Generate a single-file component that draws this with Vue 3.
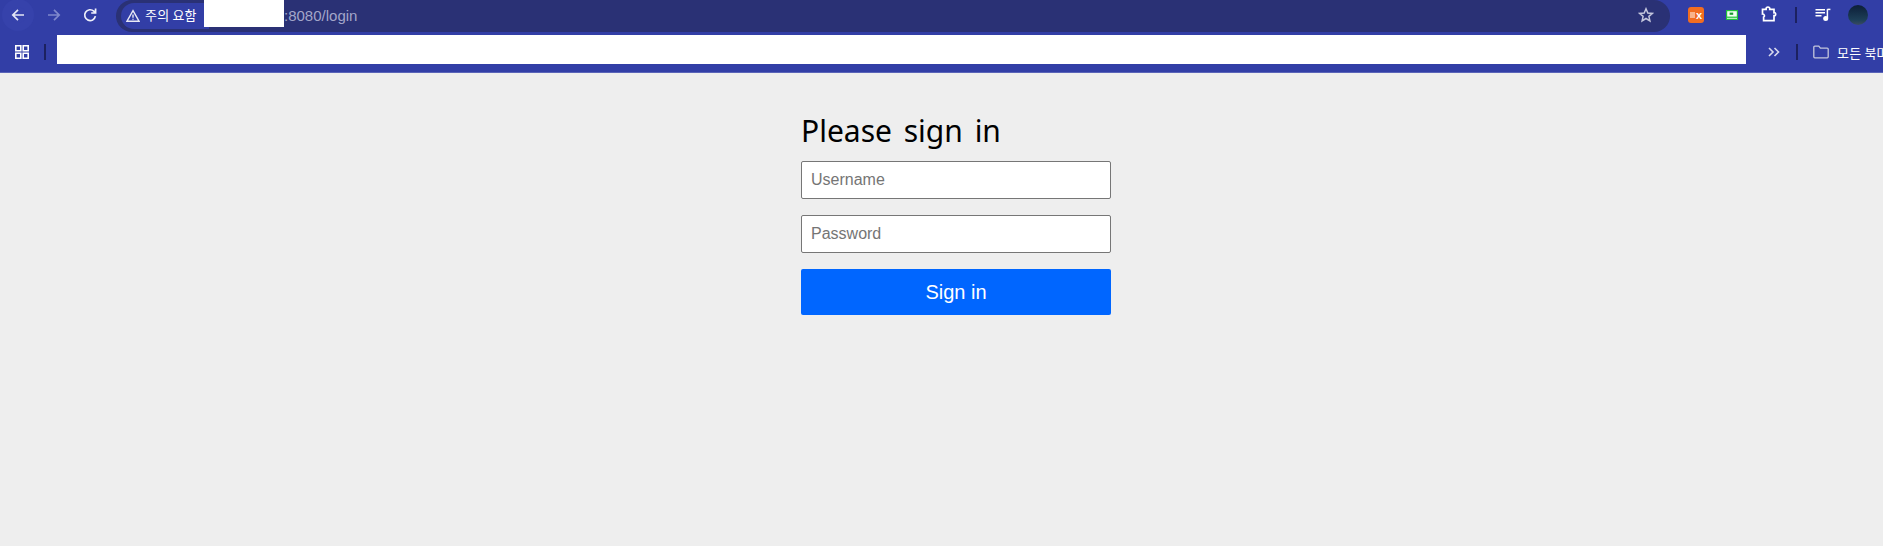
<script setup>
</script>

<template>
  <div class="page">
    <header class="chrome">
      <div class="toolbar">
        <div class="nav">
          <svg class="ic back" viewBox="0 0 16 16"><path d="M14 8H3M8 2.800 2.800 8 8 13.200" /></svg>
          <svg class="ic fwd" viewBox="0 0 16 16"><path d="M2 8h11M8 2.800 13.200 8 8 13.200" /></svg>
          <svg class="ic reload" viewBox="0 0 16 16"><path d="M13.400 9.200A5.400 5.400 0 1 1 11.800 4.200L13.400 5.800M13.600 1.600v4.400H9.200" /></svg>
        </div>
        <div class="omnibox">
          <div class="chip">
            <svg class="warn" viewBox="0 0 14 14"><path d="M7 1.600 13 12.200H1Z" /><path d="M7 5.400v3.400M7 9.800v1" /></svg>
            <span>주의 요함</span>
          </div>
          <span class="url">:8080/login</span>
          <div class="mask"></div>
          <svg class="star" viewBox="0 0 16 16"><path d="M8 1.800 9.800 6l4.600.400-3.500 3 1 4.500L8 11.500l-3.900 2.400 1-4.500-3.500-3L6.200 6Z" /></svg>
        </div>
        <div class="tools">
          <div class="ext-x"><i></i><b>x</b></div>
          <svg class="ext-green" viewBox="0 0 12 10"><rect x="0" y="0" width="12" height="10" fill="#1fc23a" /><rect x="1.200" y="1.200" width="9.600" height="5.400" fill="#f2fff2" /><rect x="3.600" y="2.600" width="3.600" height="2.200" fill="#1a9a30" /><rect x="1" y="7.800" width="10" height="1" fill="#d9ffd9" /></svg>
          <svg class="ic puzzle" viewBox="0 0 16 16"><path d="M1.500 3.400h3.600c-.5-3.200 4.200-3.200 3.700 0h4.200v3.200c2.200-.5 2.200 3.600 0 3.100v4.900H2.600v-3.400c1.400-.3 1-3.400-1.100-3.200Z" /></svg>
          <span class="sep"></span>
          <svg class="media" viewBox="0 0 16 16"><path d="M.5 2.800h9.500M.5 5.800h9.500M.5 8.800h6" /><path d="M12.400 2.200v9" /><path d="M12.400 2.400h3" /><circle cx="10.700" cy="11.600" r="2.500" fill="#fff" stroke="none" /></svg>
          <div class="avatar"></div>
        </div>
      </div>
      <div class="bookmarks">
        <svg class="apps" viewBox="0 0 14 14"><path d="M.8.800h5v5h-5ZM8.200.800h5v5h-5ZM.8 8.200h5v5h-5ZM8.200 8.200h5v5h-5Z" /></svg>
        <span class="sep short first"></span>
        <div class="hidden-bar"></div>
        <svg class="more" viewBox="0 0 12 10"><path d="M1 1 5 5 1 9M6.500 1 10.500 5 6.500 9" /></svg>
        <span class="sep short second"></span>
        <svg class="folder" viewBox="0 0 16 14"><path d="M.8 2.200a1 1 0 0 1 1-1h4l1.600 1.900h6.800a1 1 0 0 1 1 1v7.700a1 1 0 0 1-1 1H1.800a1 1 0 0 1-1-1Z" /></svg>
        <span class="all">모든 북마크</span>
      </div>
    </header>

    <main class="content">
      <form class="signin" @submit.prevent>
        <h2>Please sign in</h2>
        <input type="text" placeholder="Username" />
        <input type="password" placeholder="Password" />
        <button type="submit">Sign in</button>
      </form>
    </main>
  </div>
</template>

<style scoped>
.page {
  width: 1883px;
  height: 546px;
  overflow: hidden;
  background: #eeeeee;
  font-family: "Liberation Sans", Arial, sans-serif;
}
.chrome {
  height: 73px;
  box-sizing: border-box;
  background: #323ea6;
  border-bottom: 1px solid #5a64b8;
}
.toolbar {
  height: 35px;
  display: flex;
  align-items: flex-start;
}
.nav {
  width: 116px;
  height: 30px;
  display: flex;
  align-items: center;
  padding-left: 10px;
  gap: 20px;
  box-sizing: border-box;
}
.ic {
  width: 16px;
  height: 16px;
  fill: none;
  stroke: #fff;
  stroke-width: 1.7;
}
.back {
  border-radius: 50%;
  background: #3642ab;
  box-shadow: 0 0 0 8px #3642ab;
  stroke: #e4e6f5;
}
.fwd { stroke: #7f88cc; }
.reload { stroke: #eef0fa; }
.omnibox {
  position: relative;
  width: 1554px;
  height: 32px;
  background: #2a3175;
  border-radius: 16px;
  display: flex;
  align-items: center;
  padding-left: 5px;
  box-sizing: border-box;
}
.chip {
  display: flex;
  align-items: center;
  gap: 5px;
  height: 26px;
  width: 88px;
  padding-left: 5px;
  box-sizing: border-box;
  border-radius: 13px 0 0 13px;
  background: #323ea6;
  color: #fff;
  font: 13px "Noto Sans CJK KR", sans-serif;
  letter-spacing: 0.2px;
  white-space: nowrap;
}
.chip span { margin-top: -3px; }
.warn {
  width: 14px;
  height: 14px;
  fill: none;
  stroke: #e8e9f5;
  stroke-width: 1.4;
  flex: none;
}
.url {
  margin-left: 75px;
  margin-bottom: 2px;
  color: #a3a6c9;
  font: 15px "Liberation Sans", sans-serif;
}
.mask {
  position: absolute;
  left: 88px;
  top: 0;
  width: 80px;
  height: 27px;
  background: #fff;
}
.star {
  margin-left: auto;
  margin-right: 16px;
  margin-bottom: 2px;
  width: 16px;
  height: 16px;
  fill: none;
  stroke: #c4c6dc;
  stroke-width: 1.5;
}
.tools {
  flex: 1;
  height: 30px;
  display: flex;
  align-items: center;
  padding-left: 18px;
}
.ext-x {
  width: 16px;
  height: 16px;
  border-radius: 3px;
  background: #f26d21;
  display: flex;
  align-items: center;
  justify-content: center;
  gap: 1px;
  flex: none;
}
.ext-x i {
  width: 5px;
  height: 6px;
  background: #f9b48c;
}
.ext-x b {
  color: #fff;
  font: bold 11px/10px "Liberation Sans", sans-serif;
}
.ext-green {
  width: 12px;
  height: 10px;
  margin-left: 22px;
  flex: none;
}
.puzzle { margin-left: 23px; margin-bottom: 2px; flex: none; }
.sep {
  width: 2px;
  height: 16px;
  margin-left: 18px;
  background: #1c2160;
  flex: none;
}
.media {
  width: 16px;
  height: 16px;
  margin-left: 18px;
  fill: none;
  stroke: #fff;
  stroke-width: 1.500;
  flex: none;
}
.avatar {
  width: 20px;
  height: 20px;
  margin-left: 17px;
  border-radius: 50%;
  background: linear-gradient(#0c1e38, #1d3f57 75%, #3a4a62);
  flex: none;
}
.bookmarks {
  height: 34px;
  display: flex;
  align-items: center;
}
.apps {
  width: 14px;
  height: 14px;
  margin-left: 15px;
  fill: none;
  stroke: #fff;
  stroke-width: 1.600;
  flex: none;
}
.sep.short.first { margin-left: 15px; }
.sep.short.second { margin-left: 16px; }
.hidden-bar {
  width: 1689px;
  height: 29px;
  margin-left: 11px;
  background: #fff;
  flex: none;
  align-self: flex-start;
}
.more {
  width: 12px;
  height: 10px;
  margin-left: 22px;
  fill: none;
  stroke: #d8daee;
  stroke-width: 1.600;
  flex: none;
}
.folder {
  width: 16px;
  height: 14px;
  margin-left: 15px;
  fill: none;
  stroke: #c4c6dc;
  stroke-width: 1.300;
  flex: none;
}
.all {
  margin-left: 8px;
  color: #fff;
  font: 13px "Noto Sans CJK KR", sans-serif;
  letter-spacing: 0.2px;
  white-space: nowrap;
}
.content {
  padding-top: 39px;
  padding-left: 801px;
}
.signin {
  width: 310px;
  display: flex;
  flex-direction: column;
}
h2 {
  margin: 0 0 12px 0;
  font: 400 30px/37px "Noto Sans", sans-serif;
  word-spacing: 4px;
  color: #000;
}
input {
  height: 38px;
  box-sizing: border-box;
  margin-bottom: 16px;
  padding: 0 9px;
  background: #fff;
  border: 1px solid #767676;
  border-radius: 2px;
  font: 16px "Liberation Sans", Arial, sans-serif;
  outline: none;
}
input::placeholder { color: #757575; opacity: 1; }
button {
  height: 46px;
  border: none;
  border-radius: 2px;
  background: #0066ff;
  color: #fff;
  font: 20px "Liberation Sans", Arial, sans-serif;
}
</style>

<style>
html, body { margin: 0; background: #eeeeee; overflow: hidden; }
</style>
